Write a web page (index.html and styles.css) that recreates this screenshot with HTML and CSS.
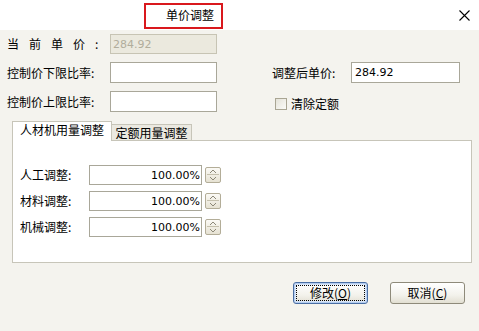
FILE: index.html
```html
<!DOCTYPE html>
<html lang="zh-CN">
<head>
  <meta charset="UTF-8" />
  <title>单价调整</title>
  <link rel="stylesheet" href="styles.css">
</head>
<body>
  <div class="dialog">

    <!-- 标题栏 -->
    <div class="titlebar">
      <span class="title">单价调整</span>
      <span class="close">
        <svg width="11" height="11" viewBox="0 0 11 11">
          <path d="M0.5 0.5 L10.5 10.5 M10.5 0.5 L0.5 10.5" stroke="#000" stroke-width="1.1" fill="none" />
        </svg>
      </span>
    </div>

    <div class="content">
      <div class="form-row row-first">
        <label class="lbl lbl-spread">当前单价:</label>
        <input class="field" type="text" value="284.92" disabled>
      </div>
      <div class="form-row">
        <label class="lbl">控制价下限比率:</label>
        <input class="field" type="text" value="">
        <label class="lbl-right">调整后单价:</label>
        <input class="field field-wide" type="text" value="284.92">
      </div>
      <div class="form-row">
        <label class="lbl">控制价上限比率:</label>
        <input class="field" type="text" value="">
        <label class="check">
          <span class="check-box"></span>
          <span>清除定额</span>
        </label>
      </div>

      <!-- 页签 -->
      <div class="tabs">
        <div class="tab active">人材机用量调整</div>
        <div class="tab">定额用量调整</div>
      </div>
      <div class="panel">
        <div class="spin-row">
          <label class="spin-lbl">人工调整:</label>
          <input class="spin-field" type="text" value="100.00%">
          <span class="spin-btn"></span>
        </div>
        <div class="spin-row">
          <label class="spin-lbl">材料调整:</label>
          <input class="spin-field" type="text" value="100.00%">
          <span class="spin-btn"></span>
        </div>
        <div class="spin-row">
          <label class="spin-lbl">机械调整:</label>
          <input class="spin-field" type="text" value="100.00%">
          <span class="spin-btn"></span>
        </div>
      </div>

      <div class="actions">
        <button class="btn btn-focus">修改(<u>O</u>)</button>
        <button class="btn">取消(<u>C</u>)</button>
      </div>
    </div>

  </div>
</body>
</html>
```

FILE: styles.css
```css
body {
  margin: 0;
  font-family: "Noto Sans CJK SC", "Noto Sans", sans-serif;
  font-size: 12px;
  color: #000;
  background-color: #f4f3ee;
}

.dialog {
  width: 479px;
  height: 331px;
  overflow: hidden;
}

.titlebar {
  display: flex;
  align-items: flex-start;
  height: 30px;
  padding-left: 144px;
  background: #fff;
  box-sizing: border-box;
}

.title {
  margin-top: 3px;
  width: 79px;
  height: 26px;
  box-sizing: border-box;
  border: 2px solid #d9181d;
  padding-left: 20px;
  padding-top: 2px;
  line-height: 16px;
}

.close {
  margin-left: auto;
  margin-right: 9px;
  margin-top: 7px;
  height: 11px;
}

.content {
  padding-top: 4px;
}

.form-row {
  display: flex;
  align-items: center;
  height: 21px;
  margin-bottom: 8px;
  padding-left: 7px;
}

.row-first {
  height: 20px;
}

.lbl {
  width: 103px;
  line-height: 16px;
}

.lbl-spread {
  letter-spacing: 10px;
}

.field {
  width: 107px;
  height: 100%;
  box-sizing: border-box;
  margin: 0;
  padding: 0 3px;
  border: 1px solid #a9a799;
  background: #fff;
  font-family: "DejaVu Sans", sans-serif;
  font-size: 11px;
  color: #000;
  outline: none;
}

.field:disabled {
  background: #ebe9de;
  border-color: #c7c4b4;
  color: #b1ad9c;
  padding-left: 2px;
}

.field-wide {
  width: 109px;
}

.lbl-right {
  width: 79px;
  margin-left: 55px;
  line-height: 16px;
}

.check {
  display: flex;
  align-items: center;
  gap: 4px;
  margin-left: 58px;
  margin-top: 5px;
  line-height: 16px;
}

.check-box {
  width: 12px;
  height: 12px;
  box-sizing: border-box;
  border: 1px solid #a9a593;
  background: linear-gradient(135deg, #e4e2d8, #fbfbf8);
}

.tabs {
  display: flex;
  align-items: flex-end;
  height: 19px;
  margin: 9px 0 0 12px;
}

.tab {
  width: 80px;
  height: 16px;
  box-sizing: border-box;
  border: 1px solid #c7c5b9;
  border-bottom: none;
  border-left: none;
  background: #ebe9e1;
  text-align: center;
  line-height: 16px;
}

.tab.active {
  width: 100px;
  height: 20px;
  margin-bottom: -1px;
  border-left: 1px solid #c7c5b9;
  background: #fff;
  position: relative;
  line-height: 15px;
}

.panel {
  width: 460px;
  height: 123px;
  box-sizing: border-box;
  margin-left: 12px;
  padding: 24px 0 0 7px;
  border: 1px solid #c7c5b9;
  background: #fff;
}

.spin-row {
  display: flex;
  align-items: center;
  height: 20px;
  margin-bottom: 6px;
}

.spin-lbl {
  width: 69px;
  line-height: 16px;
}

.spin-field {
  width: 113px;
  height: 100%;
  box-sizing: border-box;
  margin: 0;
  padding: 0 1px 0 3px;
  border: 1px solid #a9a799;
  background: #fff;
  font-family: "DejaVu Sans", sans-serif;
  font-size: 11px;
  color: #000;
  text-align: right;
  outline: none;
}

.spin-btn {
  position: relative;
  width: 16px;
  height: 16px;
  box-sizing: border-box;
  margin-left: 3px;
  border: 1px solid #b3ad98;
  border-radius: 2px;
  background: linear-gradient(#fbfaf6, #e6e2d3);
}

.spin-btn::before {
  content: "";
  position: absolute;
  left: 1px;
  right: 1px;
  top: 6px;
  border-top: 1px solid #c5c0ad;
}

.spin-btn::after {
  content: "";
  position: absolute;
  left: 4px;
  top: 2px;
  width: 6px;
  height: 10px;
  background:
    linear-gradient(135deg, transparent 45%, #8c8878 45%, #8c8878 60%, transparent 60%) 0 0 / 3px 3px no-repeat,
    linear-gradient(225deg, transparent 45%, #8c8878 45%, #8c8878 60%, transparent 60%) 3px 0 / 3px 3px no-repeat,
    linear-gradient(45deg, transparent 45%, #8c8878 45%, #8c8878 60%, transparent 60%) 0 7px / 3px 3px no-repeat,
    linear-gradient(315deg, transparent 45%, #8c8878 45%, #8c8878 60%, transparent 60%) 3px 7px / 3px 3px no-repeat;
}

.actions {
  display: flex;
  justify-content: flex-end;
  gap: 22px;
  margin: 19px 14px 0 0;
}

.btn {
  width: 75px;
  height: 22px;
  box-sizing: border-box;
  padding: 0;
  border: 1px solid #8e8a7a;
  border-radius: 3px;
  background: linear-gradient(#ffffff, #f3f2ec 60%, #e2dfd2);
  font-family: "Noto Sans CJK SC", "Noto Sans", sans-serif;
  font-size: 12px;
  line-height: 16px;
  color: #000;
  cursor: pointer;
}

.btn-focus {
  border-color: #4a6ea3;
  box-shadow: inset 0 0 0 1px #b4cdf0, inset 0 0 0 2px #d8e5f7;
  outline: 1px dotted #000;
  outline-offset: -4px;
}
```
